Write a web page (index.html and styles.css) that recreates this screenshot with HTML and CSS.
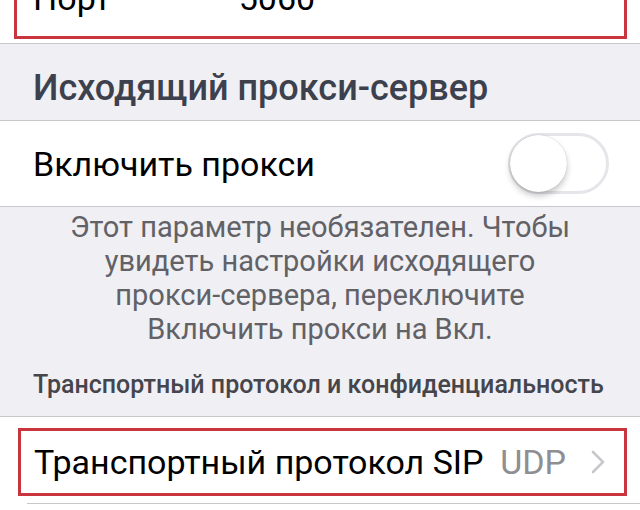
FILE: index.html
```html
<!DOCTYPE html>
<html lang="ru">
<head>
<meta charset="utf-8">
<link rel="stylesheet" href="styles.css">
</head>
<body>
<div class="page">
  <div class="list list-top">
    <div class="row row-port">
      <div class="mark mark-top">
        <span class="label">Порт</span>
        <span class="value">5060</span>
      </div>
    </div>
  </div>
  <div class="section-title">Исходящий прокси-сервер</div>
  <div class="list">
    <div class="row row-toggle">
      <span class="label">Включить прокси</span>
      <span class="switch"><span class="knob"></span></span>
    </div>
  </div>
  <p class="footer">Этот параметр необязателен. Чтобы<br>увидеть настройки исходящего<br>прокси-сервера, переключите<br>Включить прокси на Вкл.</p>
  <div class="section-small">Транспортный протокол и конфиденциальность</div>
  <div class="list list-bottom">
    <div class="row row-sip">
      <div class="mark mark-sip">
        <span class="label">Транспортный протокол SIP</span>
        <span class="detail">UDP</span>
        <svg class="chev" width="16" height="26" viewBox="0 0 16 26"><path d="M3 3 L13 13 L3 23" fill="none" stroke="#c7c7cc" stroke-width="2.6" stroke-linecap="round" stroke-linejoin="round"/></svg>
      </div>
    </div>
    <div class="inset-sep"></div>
  </div>
</div>
</body>
</html>
```

FILE: styles.css
```css
html, body {
  margin: 0;
  padding: 0;
}
body {
  background: #efeff4;
  font-family: Roboto, "Noto Sans", "Liberation Sans", sans-serif;
  width: 640px;
  height: 510px;
  overflow: hidden;
}
.page {
  margin-top: -44px;
}
.list {
  background: #fff;
  border-top: 1px solid #c8c7cc;
  border-bottom: 1px solid #c8c7cc;
}
.list-top {
  border-top: none;
}
.list-bottom {
  border-bottom: none;
  padding-bottom: 12px;
}
.row {
  display: flex;
  align-items: center;
  color: #000;
  font-size: 34px;
}
.row-port {
  height: 87px;
  padding: 0 13px 4px 14px;
  box-sizing: border-box;
  align-items: stretch;
}
.mark {
  flex: 1;
  display: flex;
  align-items: center;
  border: 3px solid #c8353e;
  box-sizing: border-box;
}
.mark-top {
  padding-left: 16px;
}
.mark-top .value {
  margin-left: 128px;
}
.section-title {
  height: 76px;
  box-sizing: border-box;
  padding: 23px 0 0 33px;
  font-size: 36px;
  font-weight: 500;
  color: #3d414d;
  line-height: 42px;
}
.row-toggle {
  height: 85px;
  padding: 0 31px 0 33px;
  justify-content: space-between;
}
.switch {
  width: 101px;
  height: 61px;
  border-radius: 31px;
  border: 3px solid #e5e5ea;
  box-sizing: border-box;
  position: relative;
  background: #fff;
}
.knob {
  position: absolute;
  left: -1px;
  top: -1px;
  width: 57px;
  height: 57px;
  border-radius: 50%;
  background: #fff;
  box-shadow: 0 4px 6px rgba(0,0,0,0.22), 0 0 1px rgba(0,0,0,0.25);
}
.footer {
  margin: 0;
  padding: 3px 10px 0;
  text-align: center;
  font-size: 29px;
  line-height: 34px;
  color: #616166;
}
.section-small {
  padding: 24px 0 16px 33px;
  font-size: 25px;
  font-weight: 500;
  color: #45454b;
  line-height: 30px;
}
.row-sip {
  height: 86px;
  padding: 11px 13px 7px 18px;
  box-sizing: border-box;
  align-items: stretch;
}
.mark-sip {
  padding: 0 18px 0 13px;
}
.mark-sip .label {
  flex: 1;
}
.detail {
  color: #8e8e93;
  margin-right: 24px;
}
.chev {
  display: block;
}
.inset-sep {
  height: 1px;
  background: #c8c7cc;
  margin-left: 27px;
}
```
